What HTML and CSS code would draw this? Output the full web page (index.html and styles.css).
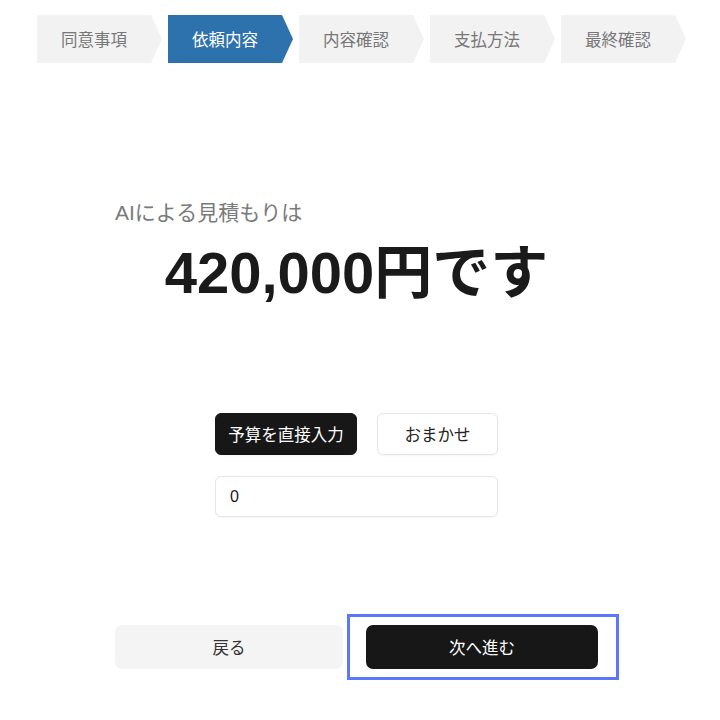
FILE: index.html
```html
<!DOCTYPE html>
<html lang="ja">
<head>
    <meta charset="UTF-8">
    <meta name="viewport" content="width=device-width, initial-scale=1.0">
    <title>見積もり</title>
    <link rel="stylesheet" href="styles.css">
</head>
<body>
    <ol class="steps">
        <li class="step">同意事項</li>
        <li class="step active">依頼内容</li>
        <li class="step">内容確認</li>
        <li class="step">支払方法</li>
        <li class="step">最終確認</li>
    </ol>

    <div class="content">
        <p class="lead">AIによる見積もりは</p>
        <p class="price">420,000円です</p>

        <div class="budget">
            <div class="choices">
                <button class="choice selected">予算を直接入力</button>
                <button class="choice">おまかせ</button>
            </div>
            <input type="text" class="amount" value="0">
        </div>

        <div class="actions">
            <button class="back">戻る</button>
            <div class="next-wrap">
                <button class="next">次へ進む</button>
            </div>
        </div>
    </div>
</body>
</html>
```

FILE: styles.css
```css
body, html {
    margin: 0;
    background: #fff;
    font-family: "Liberation Sans", "Noto Sans CJK JP", sans-serif;
    color: #1a1a1a;
}

.steps {
    display: flex;
    gap: 6px;
    list-style: none;
    margin: 15px 0 0;
    padding: 0 0 0 37px;
}

.step {
    width: 125px;
    height: 48px;
    box-sizing: border-box;
    padding-right: 11px;
    display: flex;
    align-items: center;
    justify-content: center;
    background: #f2f2f2;
    color: #777;
    font-size: 16.5px;
    clip-path: polygon(0 0, calc(100% - 11px) 0, 100% 50%, calc(100% - 11px) 100%, 0 100%);
}

.step.active {
    background: #2e72ad;
    color: #fff;
}

.content {
    width: 483px;
    margin-left: 115px;
}

.lead {
    margin: 135px 0 0;
    font-size: 21px;
    line-height: 30px;
    color: #7a7a7a;
}

.price {
    margin: 11px 0 0;
    font-size: 58px;
    font-weight: bold;
    line-height: 68px;
    text-align: center;
    color: #1a1a1a;
}

.budget {
    width: 283px;
    margin: 106px auto 0;
}

.choices {
    display: flex;
    gap: 20px;
}

.choice {
    height: 42px;
    border-radius: 6px;
    border: 1px solid #e6e6e6;
    background: #fff;
    color: #222;
    font-family: inherit;
    font-size: 16.5px;
    box-shadow: 0 1px 2px rgba(0, 0, 0, 0.04);
}

.choice.selected {
    width: 142px;
    padding: 0;
    background: #171717;
    border-color: #171717;
    color: #fff;
}

.choice:last-child {
    flex: 1;
}

.amount {
    display: block;
    width: 100%;
    height: 41px;
    box-sizing: border-box;
    margin-top: 21px;
    padding: 0 14px;
    border: 1px solid #e6e6e6;
    border-radius: 6px;
    font-family: inherit;
    font-size: 16px;
    color: #1a1a1a;
    box-shadow: 0 1px 2px rgba(0, 0, 0, 0.04);
}

.actions {
    display: flex;
    align-items: center;
    gap: 4px;
    margin-top: 97px;
}

.back {
    flex-shrink: 0;
    width: 228px;
    height: 44px;
    border: none;
    border-radius: 7px;
    background: #f4f4f4;
    color: #333;
    font-family: inherit;
    font-size: 16.5px;
}

.next-wrap {
    flex-shrink: 0;
    border: 3px solid #5b78fb;
    padding: 8px 18px 8px 16px;
}

.next {
    display: block;
    width: 232px;
    height: 44px;
    border: none;
    border-radius: 7px;
    background: #171717;
    color: #fff;
    font-family: inherit;
    font-size: 16.5px;
}
```
